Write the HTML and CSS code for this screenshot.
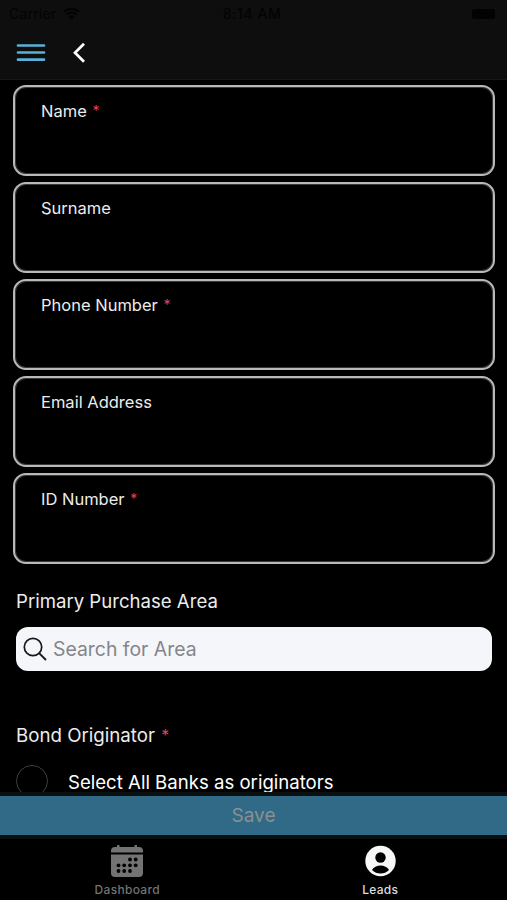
FILE: index.html
```html
<!DOCTYPE html>
<html lang="en">
<head>
    <meta charset="UTF-8">
    <meta name="viewport" content="width=device-width, initial-scale=1.0">
    <title>New Lead</title>
    <link rel="stylesheet" href="styles.css">
</head>
<body>
    <div class="app">
        <header class="header">
            <div class="status-bar">
                <div class="carrier">
                    <span>Carrier</span>
                    <svg class="wifi" viewBox="0 0 16 12">
                        <path d="M1 4.500a10 10 0 0 1 14 0M3.400 7a6.500 6.500 0 0 1 9.200 0" fill="none" stroke="currentColor" stroke-width="2"/>
                        <path d="M5.400 9a3.700 3.700 0 0 1 5.200 0L8 11.800z" fill="currentColor"/>
                    </svg>
                </div>
                <span class="clock">8:14 AM</span>
                <span class="battery"></span>
            </div>
            <nav class="toolbar">
                <svg class="menu-icon" viewBox="0 0 32 21">
                    <path d="M3 3.500h26M3 10.500h26M3 17.700h26" fill="none" stroke="currentColor" stroke-width="2.700" stroke-linecap="round"/>
                </svg>
                <svg class="back-icon" viewBox="0 0 14 22">
                    <path d="M12 1.800 3 10.800l9 9" fill="none" stroke="currentColor" stroke-width="2.700"/>
                </svg>
            </nav>
        </header>

        <main class="content">
            <form class="fields">
                <div class="field"><label>Name <span class="required">*</span></label></div>
                <div class="field"><label>Surname</label></div>
                <div class="field"><label>Phone Number <span class="required">*</span></label></div>
                <div class="field"><label>Email Address</label></div>
                <div class="field"><label>ID Number <span class="required">*</span></label></div>
            </form>

            <h2 class="heading area-heading">Primary Purchase Area</h2>
            <div class="search">
                <svg class="search-icon" viewBox="0 0 24 24">
                    <circle cx="10" cy="10" r="8.700" fill="none" stroke="currentColor" stroke-width="1.700"/>
                    <path d="M16.300 16.300 23 23" fill="none" stroke="currentColor" stroke-width="1.900"/>
                </svg>
                <span class="search-text">Search for Area</span>
            </div>

            <h2 class="heading bond-heading">Bond Originator <span class="required">*</span></h2>
            <div class="option">
                <span class="radio"></span>
                <span class="option-text">Select All Banks as originators</span>
            </div>
        </main>

        <footer class="footer">
            <div class="save-bar">
                <div class="save"><span>Save</span></div>
            </div>
            <nav class="tabs">
                <div class="tab">
                    <svg class="tab-icon calendar" viewBox="0 0 34 34">
                        <path d="M1 8.500V7a4 4 0 0 1 4-4h2V1h2.500v2h15V1H27v2h2a4 4 0 0 1 4 4v1.500z" fill="currentColor"/>
                        <path d="M1 10.500h32V29a4 4 0 0 1-4 4H5a4 4 0 0 1-4-4z" fill="currentColor"/>
                        <g class="dots">
                            <circle cx="20" cy="15.500" r="1.900"/>
                            <circle cx="25.700" cy="15.500" r="1.900"/>
                            <circle cx="8.500" cy="21.300" r="1.900"/>
                            <circle cx="14.200" cy="21.300" r="1.900"/>
                            <circle cx="20" cy="21.300" r="1.900"/>
                            <circle cx="25.700" cy="21.300" r="1.900"/>
                            <circle cx="8.500" cy="27" r="1.900"/>
                            <circle cx="14.200" cy="27" r="1.900"/>
                            <circle cx="20" cy="27" r="1.900"/>
                        </g>
                    </svg>
                    <span>Dashboard</span>
                </div>
                <div class="tab active">
                    <svg class="tab-icon" viewBox="0 0 34 34">
                        <circle cx="17.500" cy="17" r="15.200" fill="currentColor"/>
                        <circle class="cutout" cx="17.500" cy="13.500" r="5.200"/>
                        <path class="cutout" d="M9 26c1.500-3 5-4.500 8.500-4.500S24.500 23 26 26c-2.300 2.400-5.300 3.500-8.500 3.500S11.300 28.400 9 26z"/>
                    </svg>
                    <span>Leads</span>
                </div>
            </nav>
        </footer>
    </div>
</body>
</html>
```
FILE: styles.css
```css
* {
    box-sizing: border-box;
}

body {
    margin: 0;
    background-color: #000;
    color: #ececec;
    font-family: Inter, "Liberation Sans", sans-serif;
}

.app {
    display: flex;
    flex-direction: column;
    height: 900px;
    overflow: hidden;
}

.header {
    flex: none;
    height: 80px;
    background-color: #0e0e0e;
    border-bottom: 1px solid #171717;
}

.status-bar {
    display: grid;
    grid-template-columns: 1fr auto 1fr;
    align-items: center;
    height: 27px;
    padding: 0 12px 0 9px;
    color: #030303;
    font-size: 14px;
}

.carrier {
    display: flex;
    align-items: center;
    gap: 7px;
    letter-spacing: 0.2px;
}

.wifi {
    width: 17px;
    height: 13px;
}

.clock {
    font-weight: 500;
    letter-spacing: 0.6px;
}

.battery {
    justify-self: end;
    width: 23px;
    height: 10px;
    border-radius: 3px;
    background-color: #020202;
}

.toolbar {
    display: flex;
    align-items: center;
    gap: 25px;
    height: 51px;
    padding-left: 15px;
}

.menu-icon {
    width: 32px;
    height: 21px;
    color: #59b1d8;
}

.back-icon {
    width: 14px;
    height: 22px;
    color: #fff;
}

.content {
    flex: 1;
    min-height: 0;
    overflow: hidden;
    padding: 5px 12px 0 13px;
}

.fields {
    display: flex;
    flex-direction: column;
    gap: 6px;
}

.field {
    height: 91px;
    padding: 13px 26px;
    border: 2px solid #b9b9b9;
    border-radius: 13px;
    box-shadow: inset 0 0 0 1px #3a3a3a;
    font-size: 16.5px;
    line-height: 22px;
}

.required {
    margin-left: 1px;
    color: #e0405a;
    font-size: 0.85em;
    line-height: 1;
    vertical-align: 1px;
}

.heading {
    margin: 0 3px;
    font-size: 18.6px;
    font-weight: 400;
    line-height: 24px;
}

.area-heading {
    margin-top: 25px;
}

.search {
    display: flex;
    align-items: center;
    gap: 6px;
    height: 44px;
    margin: 14px 3px 0;
    padding-left: 7px;
    border-radius: 12px;
    background-color: #f4f6fa;
    color: #85858a;
    font-size: 19.4px;
}

.search-icon {
    width: 24px;
    height: 24px;
    color: #15181c;
}

.bond-heading {
    margin-top: 53px;
    font-size: 18.7px;
}

.option {
    display: flex;
    gap: 20px;
    margin: 17px 3px 0;
    color: #fff;
    font-size: 18.6px;
    line-height: 34px;
}

.radio {
    width: 32px;
    height: 32px;
    border: 1px solid #3e3e3e;
    border-radius: 50%;
}

.footer {
    flex: none;
    height: 108px;
}

.save-bar {
    height: 47px;
    padding: 4px 0;
    background-color: #0a100f;
}

.save {
    height: 39px;
    background-color: #306a87;
    color: #8a908f;
    font-size: 19px;
    line-height: 39px;
    text-align: center;
}

.tabs {
    display: grid;
    grid-template-columns: 1fr 1fr;
    height: 61px;
}

.tab {
    display: flex;
    flex-direction: column;
    align-items: center;
    gap: 4px;
    padding: 5px 0 0 1px;
    color: #737373;
    font-size: 12px;
    font-weight: 500;
    line-height: 16px;
    letter-spacing: 0.3px;
}

.tab-icon {
    width: 34px;
    height: 34px;
}

.active {
    padding-left: 0;
    color: #dcdcdc;
}

.active .tab-icon {
    color: #f8f8f8;
}

.dots,
.cutout {
    fill: #000;
}
```
